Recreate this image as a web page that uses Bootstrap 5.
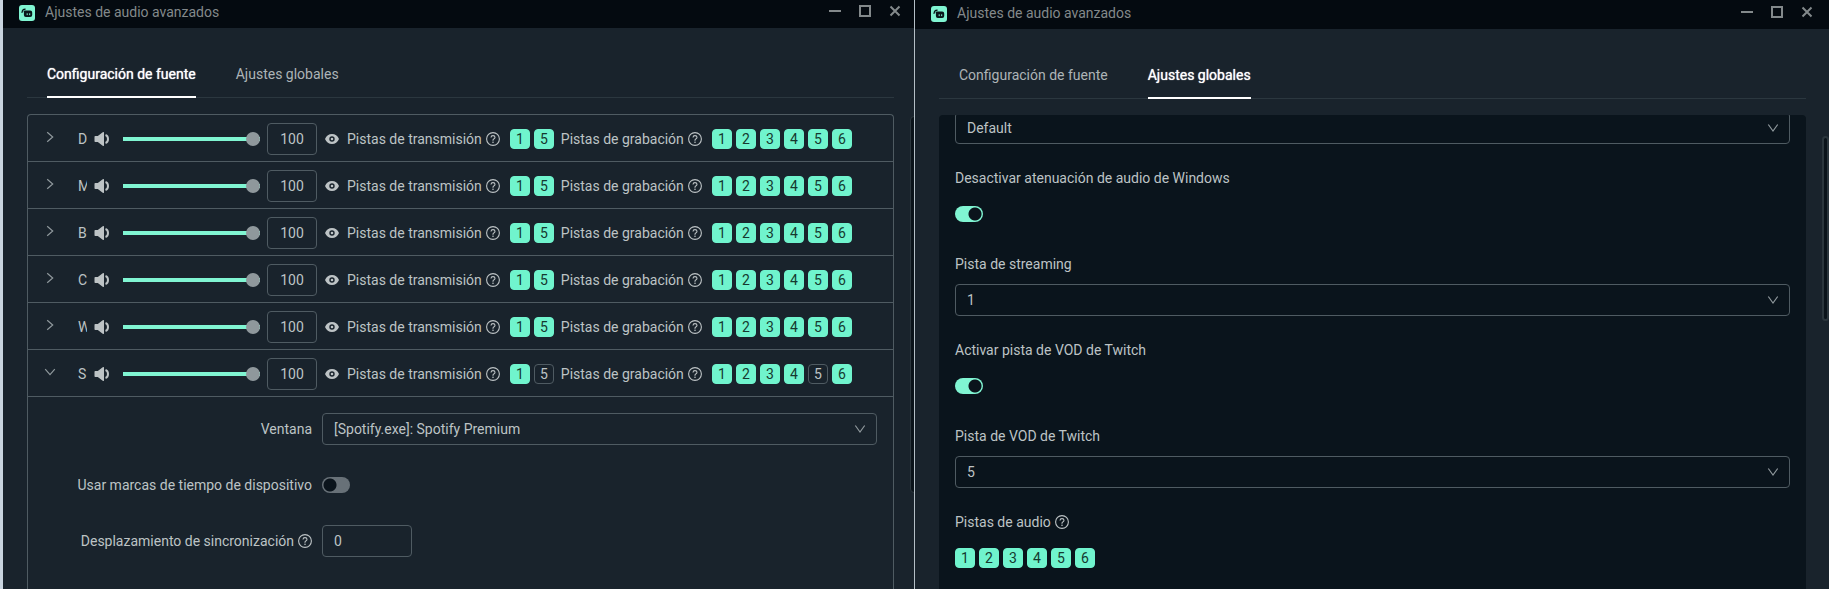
<!DOCTYPE html>
<html lang="es">
<head>
<meta charset="utf-8">
<meta name="viewport" content="width=device-width, initial-scale=1">
<title>Ajustes de audio avanzados</title>
<link href="https://cdn.jsdelivr.net/npm/bootstrap@5.3.0/dist/css/bootstrap.min.css" rel="stylesheet">
<style>
  :root { --bg: #19232c; --panel: #0a141c; --bar: #040a10; --line: #4f5b62; --text: #bdc3c5; --teal: #80f5d2; --chip: #70f4cd; }
  body { background: var(--bg); color: var(--text); font: 14px/24px Roboto, "Liberation Sans", sans-serif; }
  main { display: grid; grid-template-columns: minmax(0, 1fr) 1px minmax(0, 1fr); }
  .divider { background: #b4bfc6; }
  .win { position: relative; overflow: hidden; }
  .win-left { border-left: 3px solid #c9d4df; }
  .titlebar { height: 28px; background: var(--bar); color: #83898b; padding: 0 12px 4px 16px; }
  .win-right .titlebar { height: 29px; padding: 0 15px 3px 16px; }
  .titlebar .caption { line-height: 20px; margin-left: 10px; }
  .titlebar .icon { margin-top: 2px; }
  .winbtns { gap: 16px; margin-bottom: 2px; }
  .winbtn { width: 14px; height: 14px; color: #8e9496; }
  .winbtn svg, .icon { display: block; flex: none; }
  .bare { background: none; border: 0; padding: 0; color: inherit; }
  .tabs { gap: 40px; padding: 0 20px; height: 42px; margin-top: 28px; border-bottom: 1px solid #2b373f; }
  .tabs .bare { height: 42px; padding-bottom: 4px; line-height: 36px; border-bottom: 2px solid transparent; color: #adb4b7; }
  .tabs .active { color: #fff; border-color: #fff; text-shadow: 0 0 1px #fff; }
  .win-left .inner { margin: 0 20px 0 24px; }
  .win-right .inner { margin: 0 23px 0 24px; }
  .sources { border: 1px solid var(--line); border-bottom: 0; border-radius: 4px 4px 0 0; margin-top: 16px; }
  .source { height: 47px; border-bottom: 1px solid var(--line); padding: 2px 0 0 16px; }
  .nm { width: 9px; overflow: hidden; margin: 0 7px 0 22px; white-space: nowrap; }
  .slide { width: 137px; height: 14px; margin: 0 7px 0 13px; appearance: none; background: linear-gradient(var(--teal), var(--teal)) center / 100% 4px no-repeat; border-radius: 2px; }
  .slide::-webkit-slider-thumb { appearance: none; width: 14px; height: 14px; border-radius: 50%; background: #8f989c; }
  .box { height: 32px; background-color: transparent; border: 1px solid var(--line); border-radius: 4px; color: var(--text); padding: 0 11px; font-size: 14px; }
  .vol { width: 50px; padding: 0; }
  .delay { width: 90px; }
  select.box { display: block; width: 100%; appearance: none; background: url("data:image/svg+xml,%3Csvg xmlns='http://www.w3.org/2000/svg' width='12' height='12' fill='none' stroke='%238f989c' stroke-width='1.200'%3E%3Cpath d='M1.300 2.500 6 9l4.700-6.500'/%3E%3C/svg%3E") right 10px center no-repeat; }
  .chips { gap: 4px; }
  .source .chips { margin: 0 7px 0 10px; }
  .chips .chip { width: 20px; height: 20px; border: 1px solid var(--line); border-radius: 4px; text-align: center; line-height: 18px; color: var(--text); cursor: pointer; }
  .chips .btn-check:checked + .chip { background: var(--chip); border-color: var(--chip); color: #15392f; }
  .detail { padding: 16px 16px 0 16px; row-gap: 24px; column-gap: 10px; display: grid; grid-template-columns: 268px 1fr; align-items: center; }
  .detail .cell { height: 32px; }
  .toggle { appearance: none; width: 28px; height: 16px; border-radius: 8px; margin: 0; background: radial-gradient(circle at 8px 8px, #0b141c 6px, #687178 7px); }
  .toggle:checked { background: radial-gradient(circle at 20px 8px, #0b141c 6px, var(--teal) 7px); }
  .panel { background: var(--panel); margin-top: 16px; border-radius: 4px 4px 0 0; overflow: hidden; padding: 0 16px; }
  .scrolled { margin-top: -3px; }
  .field { margin-bottom: 22px; }
  .field .control { height: 32px; margin-top: 8px; }
  .thumb { position: absolute; border: 2px solid #2b363d; background: #0a131a; border-radius: 4px; }
  .thumb-left { right: -4px; top: 116px; width: 8px; height: 64vh; border-width: 1px; }
  .thumb-right { right: 0; top: 136px; width: 7px; height: 185px; }
</style>
</head>
<body>
<svg class="d-none" aria-hidden="true">
  <symbol id="logo" viewBox="0 0 16 16">
    <rect width="16" height="16" rx="3" fill="#80f5d2"/>
    <path d="M3 7.500Q3.200 4.300 6.200 4.100" fill="none" stroke="#09161a" stroke-width="1.100" stroke-linecap="round"/>
    <path d="M6 5.400h5.200q2 0 2 2v2.700q0 2-2 2H6.800q-1.900 0-1.900-2V7.400q0-.9-.5-1.400Q5 5.400 6 5.400z" fill="#09161a"/>
    <path d="M8.200 8.300v1.800M10.700 8.300v1.800" stroke="#80f5d2"/>
  </symbol>
  <symbol id="min" viewBox="0 0 14 14"><path d="M1 7h12" stroke="currentColor" stroke-width="2"/></symbol>
  <symbol id="max" viewBox="0 0 14 14"><path d="M2 2h10v10H2z" fill="none" stroke="currentColor" stroke-width="2"/></symbol>
  <symbol id="close" viewBox="0 0 14 14"><path d="m2.500 2.500 9 9m0-9-9 9" stroke="currentColor" stroke-width="2"/></symbol>
  <symbol id="help" viewBox="0 0 14 14">
    <circle cx="7" cy="7" r="6.400" fill="none" stroke="currentColor" stroke-width="1.100"/>
    <path d="M5 5.500q.1-1.900 2-1.900t2 1.700q0 1.100-1.200 1.600-.8.400-.8 1.300v.5" fill="none" stroke="currentColor" stroke-width="1.100"/>
    <circle cx="7" cy="10.200" r=".8" fill="currentColor"/>
  </symbol>
  <symbol id="speaker" viewBox="0 0 16 14">
    <path d="M.5 4.800q0-.8.800-.8h2.500L8.700.3q1.300-.8 1.300.5v12.400q0 1.300-1.300.5L3.800 10H1.300q-.8 0-.8-.8z" fill="currentColor"/>
    <path d="M11.500 3q2.500.8 2.500 4t-2.500 4" fill="none" stroke="currentColor" stroke-width="2"/>
  </symbol>
  <symbol id="eye" viewBox="0 0 14 12">
    <path fill-rule="evenodd" d="M7 1q4.800 0 7 5-2.200 5-7 5T0 6q2.200-5 7-5zm0 2.300a2.700 2.700 0 1 0 0 5.400 2.700 2.700 0 0 0 0-5.400zm0 1.400a1.300 1.300 0 1 1 0 2.600 1.300 1.300 0 0 1 0-2.600z" fill="currentColor"/>
  </symbol>
  <symbol id="right" viewBox="0 0 12 12"><path d="M3.200 1.200 8.700 6l-5.500 4.800" fill="none" stroke="#8f989c" stroke-width="1.200"/></symbol>
  <symbol id="down" viewBox="0 0 12 12"><path d="M1.200 3.200 6 8.700l4.800-5.500" fill="none" stroke="#8f989c" stroke-width="1.200"/></symbol>
</svg>

<main class="vh-100 overflow-hidden">
  <section class="win win-left d-flex flex-column">
    <header class="titlebar d-flex align-items-center flex-shrink-0">
      <svg class="icon" width="16" height="16"><use href="#logo"/></svg>
      <span class="caption me-auto">Ajustes de audio avanzados</span>
      <div class="winbtns d-flex">
        <button class="bare winbtn" aria-label="Minimizar"><svg width="14" height="14"><use href="#min"/></svg></button>
        <button class="bare winbtn" aria-label="Maximizar"><svg width="14" height="14"><use href="#max"/></svg></button>
        <button class="bare winbtn" aria-label="Cerrar"><svg width="14" height="14"><use href="#close"/></svg></button>
      </div>
    </header>
    <div class="inner d-flex flex-column flex-fill">
      <nav class="tabs d-flex flex-shrink-0">
        <button class="bare active">Configuración de fuente</button>
        <button class="bare">Ajustes globales</button>
      </nav>
      <div class="sources flex-fill">
        <div id="rows"></div>
        <div class="detail">
          <label class="text-end" for="window-source">Ventana</label>
          <select class="box" id="window-source"><option>[Spotify.exe]: Spotify Premium</option></select>
          <label class="text-end" for="stamps">Usar marcas de tiempo de dispositivo</label>
          <div class="cell d-flex align-items-center"><input class="toggle" type="checkbox" role="switch" id="stamps"></div>
          <div class="d-flex align-items-center justify-content-end gap-1">
            <label for="sync">Desplazamiento de sincronización</label>
            <svg class="icon" width="14" height="14"><use href="#help"/></svg>
          </div>
          <div><input class="box delay d-block" id="sync" type="text" value="0"></div>
        </div>
      </div>
    </div>
    <div class="thumb thumb-left"></div>
  </section>

  <div class="divider"></div>

  <section class="win win-right d-flex flex-column">
    <header class="titlebar d-flex align-items-center flex-shrink-0">
      <svg class="icon" width="16" height="16"><use href="#logo"/></svg>
      <span class="caption me-auto">Ajustes de audio avanzados</span>
      <div class="winbtns d-flex">
        <button class="bare winbtn" aria-label="Minimizar"><svg width="14" height="14"><use href="#min"/></svg></button>
        <button class="bare winbtn" aria-label="Maximizar"><svg width="14" height="14"><use href="#max"/></svg></button>
        <button class="bare winbtn" aria-label="Cerrar"><svg width="14" height="14"><use href="#close"/></svg></button>
      </div>
    </header>
    <div class="inner d-flex flex-column flex-fill">
      <nav class="tabs d-flex flex-shrink-0">
        <button class="bare">Configuración de fuente</button>
        <button class="bare active">Ajustes globales</button>
      </nav>
      <div class="panel flex-fill">
        <div class="scrolled">
          <div class="field"><select class="box" aria-label="Dispositivo de monitoreo"><option>Default</option></select></div>
          <div class="field">
            <label class="d-block" for="ducking">Desactivar atenuación de audio de Windows</label>
            <div class="control d-flex align-items-center"><input class="toggle" type="checkbox" role="switch" id="ducking" checked></div>
          </div>
          <div class="field">
            <label class="d-block" for="stream-track">Pista de streaming</label>
            <div class="control"><select class="box" id="stream-track"><option>1</option></select></div>
          </div>
          <div class="field">
            <label class="d-block" for="vod">Activar pista de VOD de Twitch</label>
            <div class="control d-flex align-items-center"><input class="toggle" type="checkbox" role="switch" id="vod" checked></div>
          </div>
          <div class="field">
            <label class="d-block" for="vod-track">Pista de VOD de Twitch</label>
            <div class="control"><select class="box" id="vod-track"><option>5</option></select></div>
          </div>
          <div class="field mb-0">
            <div class="d-flex align-items-center gap-1">Pistas de audio <svg class="icon" width="14" height="14"><use href="#help"/></svg></div>
            <div class="control d-flex align-items-center"><div class="chips d-flex" id="audio-tracks"></div></div>
          </div>
        </div>
      </div>
    </div>
    <div class="thumb thumb-right"></div>
  </section>
</main>

<script>
  const icon = (id, w, h) => `<svg class="icon" width="${w}" height="${h}"><use href="#${id}"/></svg>`;
  const chips = (prefix, numbers, off) => numbers.map(n =>
    `<input class="btn-check" type="checkbox" id="${prefix}-${n}" ${n === off ? '' : 'checked'}><label class="chip" for="${prefix}-${n}">${n}</label>`).join('');
  // Each source: visible name, track switched off, whether its details are open
  const sources = [['D'], ['M'], ['B'], ['C'], ['W'], ['S', 5, true]];
  document.getElementById('rows').innerHTML = sources.map(([name, off, open], i) => `
    <div class="source d-flex align-items-center">
      <button class="bare mb-1" aria-label="Detalles" aria-expanded="${!!open}">${icon(open ? 'down' : 'right', 12, 12)}</button>
      <span class="nm">${name}</span>
      <button class="bare" aria-label="Silenciar">${icon('speaker', 16, 14)}</button>
      <input class="slide" type="range" value="100" aria-label="Volumen">
      <input class="box vol text-center" type="text" value="100" aria-label="Nivel">
      <button class="bare mx-2" aria-label="Ocultar">${icon('eye', 14, 12)}</button>
      <span class="me-1">Pistas de transmisión</span>${icon('help', 14, 14)}
      <div class="chips d-flex">${chips('t' + i, [1, 5], off)}</div>
      <span class="me-1">Pistas de grabación</span>${icon('help', 14, 14)}
      <div class="chips d-flex">${chips('g' + i, [1, 2, 3, 4, 5, 6], off)}</div>
    </div>`).join('');
  document.getElementById('audio-tracks').innerHTML = chips('a', [1, 2, 3, 4, 5, 6]);
</script>
<script src="https://cdn.jsdelivr.net/npm/bootstrap@5.3.0/dist/js/bootstrap.bundle.min.js"></script>
</body>
</html>
